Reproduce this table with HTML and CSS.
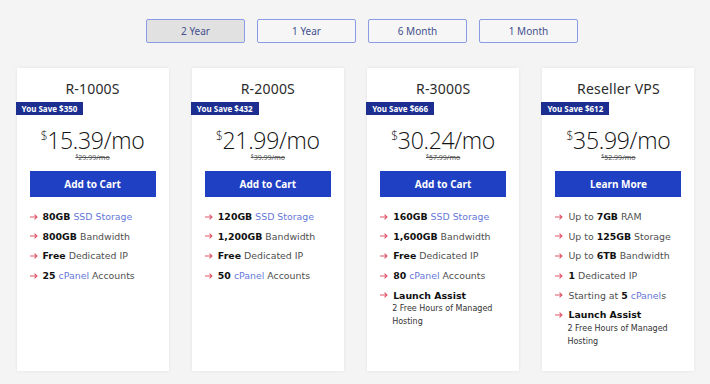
FILE: index.html
```html
<!DOCTYPE html>
<html>
<head>
<meta charset="utf-8">
<link rel="stylesheet" href="styles.css">
</head>
<body>
<div class="tabs">
  <button class="tab active">2 Year</button>
  <button class="tab">1 Year</button>
  <button class="tab">6 Month</button>
  <button class="tab">1 Month</button>
</div>
<div class="cards">
  <div class="card">
    <h2 class="title">R-1000S</h2>
    <div class="badge">You Save $350</div>
    <div class="price"><sup>$</sup>15.39/mo</div>
    <div class="old"><sup>$</sup>29.99/mo</div>
    <a class="btn">Add to Cart</a>
    <ul class="feats">
      <li><svg class="arr" viewBox="0 0 8 6"><path d="M0 3H7M4.5 0.6L7 3L4.5 5.4"/></svg><span><b>80GB</b> <span class="lnk">SSD Storage</span></span></li>
      <li><svg class="arr" viewBox="0 0 8 6"><path d="M0 3H7M4.5 0.6L7 3L4.5 5.4"/></svg><span><b>800GB</b> Bandwidth</span></li>
      <li><svg class="arr" viewBox="0 0 8 6"><path d="M0 3H7M4.5 0.6L7 3L4.5 5.4"/></svg><span><b>Free</b> Dedicated IP</span></li>
      <li><svg class="arr" viewBox="0 0 8 6"><path d="M0 3H7M4.5 0.6L7 3L4.5 5.4"/></svg><span><b>25</b> <span class="lnk">cPanel</span> Accounts</span></li>
    </ul>
  </div>
  <div class="card">
    <h2 class="title">R-2000S</h2>
    <div class="badge">You Save $432</div>
    <div class="price"><sup>$</sup>21.99/mo</div>
    <div class="old"><sup>$</sup>39.99/mo</div>
    <a class="btn">Add to Cart</a>
    <ul class="feats">
      <li><svg class="arr" viewBox="0 0 8 6"><path d="M0 3H7M4.5 0.6L7 3L4.5 5.4"/></svg><span><b>120GB</b> <span class="lnk">SSD Storage</span></span></li>
      <li><svg class="arr" viewBox="0 0 8 6"><path d="M0 3H7M4.5 0.6L7 3L4.5 5.4"/></svg><span><b>1,200GB</b> Bandwidth</span></li>
      <li><svg class="arr" viewBox="0 0 8 6"><path d="M0 3H7M4.5 0.6L7 3L4.5 5.4"/></svg><span><b>Free</b> Dedicated IP</span></li>
      <li><svg class="arr" viewBox="0 0 8 6"><path d="M0 3H7M4.5 0.6L7 3L4.5 5.4"/></svg><span><b>50</b> <span class="lnk">cPanel</span> Accounts</span></li>
    </ul>
  </div>
  <div class="card">
    <h2 class="title">R-3000S</h2>
    <div class="badge">You Save $666</div>
    <div class="price"><sup>$</sup>30.24/mo</div>
    <div class="old"><sup>$</sup>57.99/mo</div>
    <a class="btn">Add to Cart</a>
    <ul class="feats">
      <li><svg class="arr" viewBox="0 0 8 6"><path d="M0 3H7M4.5 0.6L7 3L4.5 5.4"/></svg><span><b>160GB</b> <span class="lnk">SSD Storage</span></span></li>
      <li><svg class="arr" viewBox="0 0 8 6"><path d="M0 3H7M4.5 0.6L7 3L4.5 5.4"/></svg><span><b>1,600GB</b> Bandwidth</span></li>
      <li><svg class="arr" viewBox="0 0 8 6"><path d="M0 3H7M4.5 0.6L7 3L4.5 5.4"/></svg><span><b>Free</b> Dedicated IP</span></li>
      <li><svg class="arr" viewBox="0 0 8 6"><path d="M0 3H7M4.5 0.6L7 3L4.5 5.4"/></svg><span><b>80</b> <span class="lnk">cPanel</span> Accounts</span></li>
      <li class="assist"><svg class="arr" viewBox="0 0 8 6"><path d="M0 3H7M4.5 0.6L7 3L4.5 5.4"/></svg><span><b>Launch Assist</b></span></li>
      <li class="sub">2 Free Hours of Managed Hosting</li>
    </ul>
  </div>
  <div class="card">
    <h2 class="title">Reseller VPS</h2>
    <div class="badge">You Save $612</div>
    <div class="price"><sup>$</sup>35.99/mo</div>
    <div class="old"><sup>$</sup>52.99/mo</div>
    <a class="btn">Learn More</a>
    <ul class="feats">
      <li><svg class="arr" viewBox="0 0 8 6"><path d="M0 3H7M4.5 0.6L7 3L4.5 5.4"/></svg><span>Up to <b>7GB</b> RAM</span></li>
      <li><svg class="arr" viewBox="0 0 8 6"><path d="M0 3H7M4.5 0.6L7 3L4.5 5.4"/></svg><span>Up to <b>125GB</b> Storage</span></li>
      <li><svg class="arr" viewBox="0 0 8 6"><path d="M0 3H7M4.5 0.6L7 3L4.5 5.4"/></svg><span>Up to <b>6TB</b> Bandwidth</span></li>
      <li><svg class="arr" viewBox="0 0 8 6"><path d="M0 3H7M4.5 0.6L7 3L4.5 5.4"/></svg><span><b>1</b> Dedicated IP</span></li>
      <li><svg class="arr" viewBox="0 0 8 6"><path d="M0 3H7M4.5 0.6L7 3L4.5 5.4"/></svg><span>Starting at <b>5</b> <span class="lnk">cPanel</span>s</span></li>
      <li class="assist"><svg class="arr" viewBox="0 0 8 6"><path d="M0 3H7M4.5 0.6L7 3L4.5 5.4"/></svg><span><b>Launch Assist</b></span></li>
      <li class="sub">2 Free Hours of Managed Hosting</li>
    </ul>
  </div>
</div>
</body>
</html>
```
FILE: styles.css
```css
* { box-sizing: border-box; }
html, body { margin: 0; padding: 0; }
body {
  width: 710px;
  height: 384px;
  background: #f4f4f4;
  font-family: "Noto Sans", "DejaVu Sans", sans-serif;
  overflow: hidden;
}
.tabs {
  display: flex;
  justify-content: center;
  gap: 12px;
  padding: 19px 0 0 14px;
}
.tab {
  width: 99px;
  height: 24px;
  border: 1px solid #8a9be6;
  border-radius: 2px;
  background: #f6f6f6;
  color: #44508e;
  font-family: "Noto Sans", sans-serif;
  font-size: 10px;
  padding: 0;
}
.tab.active { background: #e2e1e1; }
.cards {
  display: flex;
  justify-content: center;
  gap: 23.3px;
  margin-top: 25px;
  padding-left: 1px;
}
.card {
  width: 152px;
  height: 303px;
  background: #fff;
  box-shadow: 0 0 3px rgba(0,0,0,0.08);
  padding: 0 13px;
  display: flex;
  flex-direction: column;
}
.title {
  margin: 12px 0 0;
  text-align: center;
  font-weight: 400;
  font-size: 14px;
  line-height: 18px;
  color: #2b2b2b;
  letter-spacing: 0.2px;
}
.badge {
  margin: 4px 0 0 -14px;
  align-self: flex-start;
  background: #1c2f90;
  color: #fff;
  font-size: 8px;
  font-weight: 700;
  height: 13px;
  line-height: 13px;
  padding: 0 6px 0 6px;
  white-space: nowrap;
}
.price {
  margin-top: 13px;
  text-align: center;
  font-family: "Open Sans", "Noto Sans", sans-serif;
  font-size: 23px;
  font-weight: 300;
  line-height: 24px;
  color: #111;
  letter-spacing: -0.3px;
}
.price sup {
  font-size: 12px;
  vertical-align: 9px;
  line-height: 0;
}
.old {
  text-align: center;
  font-size: 7px;
  line-height: 9px;
  color: #555;
  text-decoration: line-through;
  margin-top: 1px;
}
.old sup { font-size: 5px; vertical-align: 2px; line-height: 0; }
.btn {
  display: block;
  margin-top: 9px;
  height: 26px;
  line-height: 26px;
  background: #1f40c3;
  color: #fff;
  text-align: center;
  font-size: 10px;
  font-weight: 700;
}
.feats {
  list-style: none;
  margin: 10px 0 0;
  padding: 0;
  font-family: "DejaVu Sans", "Noto Sans", sans-serif;
  font-size: 9.4px;
  color: #4f4f4f;
}
.feats li {
  display: flex;
  align-items: center;
  height: 19.6px;
  white-space: nowrap;
}
.feats b { color: #111; font-weight: 700; }
.lnk { color: #6678d8; }
.arr {
  width: 8px;
  height: 6px;
  margin-right: 5px;
  flex: none;
  fill: none;
  stroke: #e05468;
  stroke-width: 1.1;
}
.feats li.sub {
  display: block;
  height: auto;
  white-space: normal;
  font-size: 8px;
  line-height: 13.5px;
  color: #333;
  margin-top: -3px;
  padding: 0 6px 0 12px;
}
```
